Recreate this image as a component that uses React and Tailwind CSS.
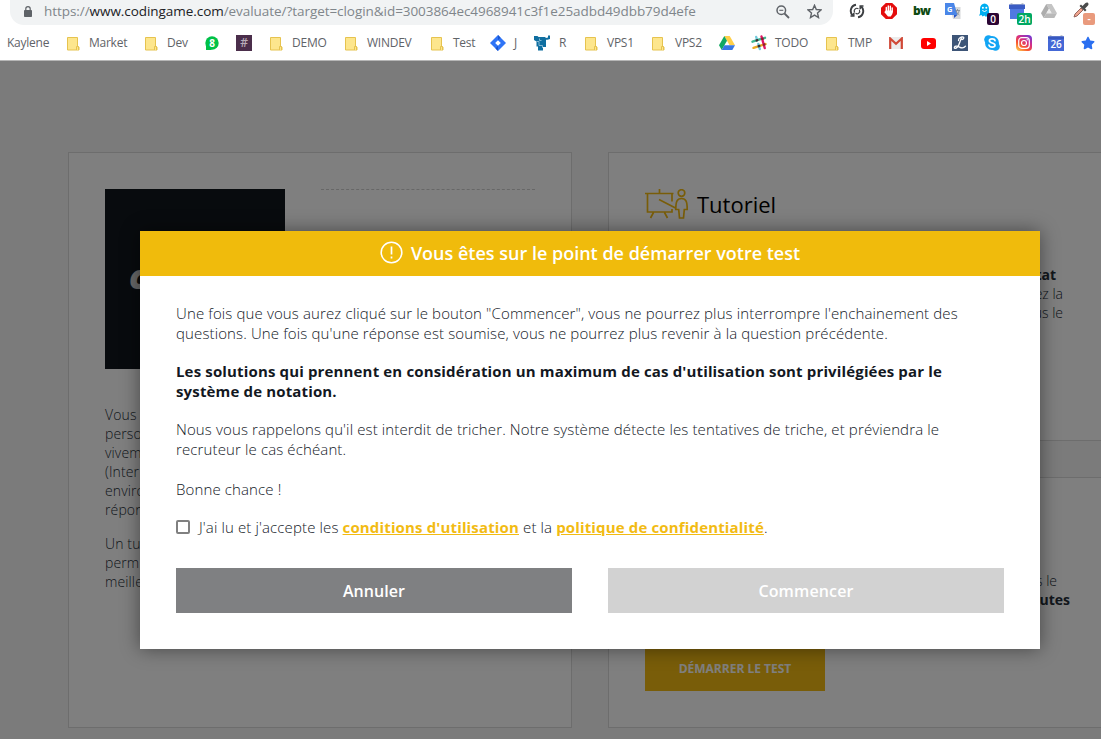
import React from "react";
import { FaStar } from "react-icons/fa";

const Folder = () => (
  <svg className="h-[15px] w-[13px] shrink-0" viewBox="0 0 13 15">
    <path d="M.5 1.500h10v9.500h1.500v3H.5z" fill="#fde68d" stroke="#e6c34f" />
    <path d="M9.500 14v-3.500h2V14" fill="#fde68d" stroke="#e6c34f" />
  </svg>
);

const Bm = ({ w, tw, icon, label }) => (
  <div className={"flex shrink-0 items-center " + w}>
    {icon}
    {label && <span className={"whitespace-nowrap " + tw}>{label}</span>}
  </div>
);

const Slot = ({ w, children }) => (
  <div className={"flex h-5 shrink-0 items-center " + w}>{children}</div>
);

const HangoutsIcon = () => (
  <svg className="size-[14px]" viewBox="0 0 14 14">
    <circle cx="7" cy="7" r="6.7" fill="#00c147" />
    <path d="M1 9v5h6z" fill="#00c147" />
    <text x="7" y="10.5" textAnchor="middle" fontSize="10" fontWeight="700" fill="#fff" fontFamily="Open Sans">8</text>
  </svg>
);

const HashIcon = () => (
  <div className="flex size-4 items-center justify-center bg-[#4b2e4b] text-[12px] font-semibold text-[#b9adb9]">#</div>
);

const JiraIcon = () => (
  <svg className="size-4" viewBox="0 0 16 16">
    <path d="M8 0l8 8-8 8-8-8z" fill="#2f74f6" />
    <path d="M8 5.200L10.800 8 8 10.800 5.200 8z" fill="#fff" />
    <path d="M8 0l2.500 2.500L8 5.200zM8 16l-2.500-2.500L8 10.800z" fill="#1a54cf" />
  </svg>
);

const RedmineIcon = () => (
  <svg className="size-4" viewBox="0 0 16 16">
    <path d="M0 1h3.500l1 1h6.500l1 1 2-.5V.5h2V4l-2.500.8h-1.500v7.200H9v3.500H4v-4H2.500V6.500L0 5z" fill="#0f6ea0" />
    <path d="M2.500 6.500H5v4h3.500M5.500 3.500v2h2M8.500 10.500V13" fill="none" stroke="#9cc8de" strokeWidth=".8" />
  </svg>
);

const DriveIcon = ({ gray }) => (
  <svg className="h-[14px] w-4" viewBox="0 0 16 14">
    <path d="M5.300 0h5.400L16 9.300h-5.400z" fill={gray ? "#c4c4c4" : "#ffcf48"} />
    <path d="M5.300 0L8 4.700 2.700 14 0 9.300z" fill={gray ? "#adadad" : "#11a861"} />
    <path d="M5.400 9.300H16L13.300 14H2.700z" fill={gray ? "#b9b9b9" : "#3777e3"} />
    {gray && <path d="M8 4.700l2.600 4.600H5.400z" fill="#ececec" />}
  </svg>
);

const SlackIcon = () => (
  <svg className="size-4" viewBox="0 0 16 16" fill="none" strokeWidth="2.400" strokeLinecap="round">
    <path d="M1.500 6.700l12.500-3.900" stroke="#3eb890" />
    <path d="M2.500 12.800l12-3.700" stroke="#e9a820" />
    <path d="M5.200 2l1 3.200M7.300 9l1.500 5" stroke="#70cadb" />
    <path d="M10.500 1.500l3.200 11.500" stroke="#e01765" />
    <path d="M5.700 5.400l.6-.2M7.700 11.200l.6-.2" stroke="#3c2b2c" />
    <path d="M11.200 3.900l.4-.1M13 9.600l.3-.1" stroke="#8c1d33" />
  </svg>
);

const GmailIcon = () => (
  <svg className="h-3 w-[14px]" viewBox="0 0 14 12">
    <path d="M0 0h14v12H0z" fill="#ececec" />
    <path d="M1.200 12V1.500L7 6.700l5.800-5.200V12" fill="none" stroke="#d14836" strokeWidth="2.200" />
  </svg>
);

const YoutubeIcon = () => (
  <svg className="h-[11px] w-[15px]" viewBox="0 0 15 11">
    <rect width="15" height="11" rx="3" fill="#f00" />
    <path d="M6 3l4 2.500L6 8z" fill="#fff" />
  </svg>
);

const ScriptLIcon = () => (
  <svg className="size-4" viewBox="0 0 16 16">
    <rect width="16" height="16" fill="#3d5577" />
    <path d="M6.500 5.500C6.500 3.500 8.500 2 10.500 2s1.500 2-.5 2.500M10 2C8 5 7.500 10 5.500 12S1.800 13.500 2.500 12s3-.8 5 .2 4.500 1 6-1" fill="none" stroke="#fff" strokeWidth="1.300" strokeLinecap="round" />
  </svg>
);

const SkypeIcon = () => (
  <svg className="size-4" viewBox="0 0 16 16">
    <circle cx="8" cy="8" r="7" fill="#12a5f4" />
    <circle cx="4.500" cy="4.500" r="4.300" fill="#12a5f4" />
    <circle cx="11.500" cy="11.500" r="4.300" fill="#12a5f4" />
    <path d="M11 5.600C10.500 3.300 5.400 3.300 5.400 5.700c0 2.800 5.600 1.700 5.600 4.500 0 2.500-5.500 2.500-6 0" fill="none" stroke="#fff" strokeWidth="1.700" strokeLinecap="round" />
  </svg>
);

const InstagramIcon = () => (
  <svg className="size-4" viewBox="0 0 16 16">
    <defs>
      <linearGradient id="ig" x1="0.100" y1="1" x2="0.800" y2="0">
        <stop offset="0" stopColor="#ffd04f" />
        <stop offset=".35" stopColor="#f8522e" />
        <stop offset=".65" stopColor="#d42d88" />
        <stop offset="1" stopColor="#7638d0" />
      </linearGradient>
    </defs>
    <rect width="16" height="16" rx="4" fill="url(#ig)" />
    <rect x="2.700" y="2.700" width="10.600" height="10.600" rx="3" fill="none" stroke="#fff" strokeWidth="1.200" />
    <circle cx="8" cy="8" r="2.500" fill="none" stroke="#fff" strokeWidth="1.200" />
    <circle cx="11.200" cy="4.800" r=".7" fill="#fff" />
  </svg>
);

const CalendarIcon = () => (
  <svg className="size-4" viewBox="0 0 16 16">
    <path d="M1.500 0h2v1h9V0h2v2h-13z" fill="#c3c7cf" />
    <path d="M0 1.500h16V16H0z" fill="#4468d6" />
    <path d="M0 1.500h16V4H0z" fill="#3858c0" />
    <text x="8" y="12.800" textAnchor="middle" fontSize="10" fontWeight="600" fill="#fff" fontFamily="Open Sans">26</text>
  </svg>
);

const CalendarBlankIcon = () => (
  <svg className="size-4" viewBox="0 0 16 16">
    <path d="M1.500 0h2v1h9V0h2v2h-13z" fill="#c3c7cf" />
    <path d="M1 5h14v11H1z" fill="#5079e0" />
    <path d="M0 1.500h16V6H0z" fill="#3b5cc4" />
  </svg>
);

const LockIcon = () => (
  <svg className="h-[11px] w-2" viewBox="0 0 8 11">
    <rect y="4" width="8" height="7" rx=".8" fill="#5f6368" />
    <path d="M1.800 4.500V2.800a2.200 2.200 0 014.400 0v1.700" fill="none" stroke="#5f6368" strokeWidth="1.200" />
  </svg>
);

const ZoomOutIcon = () => (
  <svg className="size-[14px]" viewBox="0 0 14 14" fill="none" stroke="#5f6368" strokeWidth="1.500">
    <circle cx="5.300" cy="5.300" r="4.300" />
    <path d="M8.500 8.500l4.500 4.500" strokeWidth="1.800" />
    <path d="M3.300 5.300h4" strokeWidth="1.100" />
  </svg>
);

const StarIcon = () => (
  <svg className="size-[15px]" viewBox="0 0 15 15" fill="none" stroke="#5f6368" strokeWidth="1.400">
    <path d="M7.500 1.300l1.800 4.200 4.700.4-3.500 3.100 1 4.500-4-2.400-4 2.400 1-4.500L1 5.900l4.700-.4z" />
  </svg>
);

const SyncIcon = () => (
  <svg className="size-4" viewBox="0 0 16 16" fill="none" stroke="#3c3f42" strokeWidth="1.900">
    <path d="M7 1.800A6.200 6.200 0 003.800 12.500" />
    <path d="M9 14.200A6.200 6.200 0 0012.200 3.500" />
    <path d="M1.500 13h3.300V9.700M14.500 3h-3.300v3.300" strokeWidth="1.500" />
    <path d="M5.800 9.500a2.600 2.600 0 013.700-3.600M10.300 6.800a2.600 2.600 0 01-3.700 3.500" strokeWidth="1.100" />
  </svg>
);

const AdblockIcon = () => (
  <svg className="size-4" viewBox="0 0 16 16">
    <path d="M4.800 0h6.400L16 4.800v6.400L11.200 16H4.800L0 11.200V4.800z" fill="#e40d0d" />
    <path d="M5.300 9V4.500M7.300 8V3M9.300 8V3.300M11.200 9V5" stroke="#fff" strokeWidth="1.400" strokeLinecap="round" />
    <path d="M4.600 7.500h7.300l-.5 3.500-1.700 2.500H7L3.200 9l1-.7z" fill="#fff" />
  </svg>
);

const TranslateIcon = () => (
  <svg className="size-4" viewBox="0 0 16 16">
    <path d="M5 4h10.500v12H8z" fill="#d6d8da" />
    <path d="M0 0h9l3.500 12H0z" fill="#4a86e8" />
    <path d="M9 12h3.500L9 15z" fill="#2a56c6" />
    <text x="4.800" y="8.500" textAnchor="middle" fontSize="7.500" fontWeight="700" fill="#fff" fontFamily="Open Sans">G</text>
    <path d="M10.500 7.500h4.500M12.500 6v1.500M11.300 8c.5 2 1.700 3 3 4M14 8c-.3 2-1.200 3-2.500 4" fill="none" stroke="#7d8790" strokeWidth=".8" />
  </svg>
);

const GhostIcon = () => (
  <svg className="h-[15px] w-[13px]" viewBox="0 0 12 15">
    <path d="M1.500 6a4.500 5.500 0 019 0v5l1 2-2.500-.5-1.500 1.500-1.500-1.500L4 13.500l-1-1.500-2.500.8 1-2.300z" fill="#00aef0" />
    <circle cx="4.400" cy="4.700" r="1" fill="#fff" />
    <circle cx="7.800" cy="4.700" r="1" fill="#fff" />
    <path d="M3.800 7.500q2.200 2 4.400 0" fill="none" stroke="#fff" />
  </svg>
);

const DropperIcon = () => (
  <svg className="size-4" viewBox="0 0 16 16">
    <path d="M1 15l1-3 6-6 2 2-6 6z" fill="#f0a58f" stroke="#8d5a52" strokeWidth=".9" />
    <path d="M6.500 4l5.500 5.500 1.500-1.500-1.500-1.500 3-3C16.500 1.500 14.500-.5 12.500 1L9.500 4 8 2.500z" fill="#4b4b4b" />
  </svg>
);

const TutorialIcon = () => (
  <svg className="h-[30px] w-11" viewBox="0 0 44 30" fill="none" stroke="#f2bb13" strokeWidth="1.700">
    <path d="M0 4.500h28.500M14.500 0v4M2.500 4.500v18.500h24.500v-3M27 5v7.500M8.500 23.500L5.500 29M19.500 23.500L22.500 29M14 10.500l16.500 8.500" />
    <circle cx="36.500" cy="4" r="3.300" />
    <path d="M34.500 29l-.8-8.500h-2.900c0-7.500 1-11 5.700-11s5.700 3.500 5.700 11h-2.900L38.500 29z" />
  </svg>
);

const Badge = ({ cls, children }) => (
  <span className={"absolute flex items-center justify-center rounded-[2px] text-[10px] font-semibold text-white " + cls}>{children}</span>
);

function Chrome() {
  return (
    <header className="h-[61px] shrink-0 overflow-hidden border-b border-[#b6b6b6] bg-white">
      <div className="flex h-[25px]">
        <div className="ml-2.5 flex w-[823px] shrink-0 items-center rounded-b-[14px] bg-[#f1f3f4] pb-[2px] pl-3.5">
          <LockIcon />
          <div className="ml-3 w-[732px] text-[13.500px] tracking-[-0.055px] whitespace-nowrap text-[#80868b]">
            https://<span className="text-[#202124]">www.codingame.com</span>/evaluate/?target=clogin&amp;id=3003864ec4968941c3f1e25adbd49dbb79d4efe
          </div>
          <ZoomOutIcon />
          <div className="ml-[17px]"><StarIcon /></div>
        </div>
        <div className="ml-4 flex items-start pt-[1px]">
          <Slot w="w-8"><SyncIcon /></Slot>
          <Slot w="w-8"><AdblockIcon /></Slot>
          <Slot w="w-8"><span className="text-[12px] leading-none font-extrabold tracking-[-0.800px] text-[#0d4a12]">bw</span></Slot>
          <Slot w="w-8"><TranslateIcon /></Slot>
          <div className="relative flex h-6 w-8 items-start pt-[2px] pl-[1px]"><GhostIcon /><Badge cls="left-[10px] top-[12px] h-3 w-3 bg-[#2b0534]">0</Badge></div>
          <div className="relative h-6 w-8 pt-[2px]"><CalendarBlankIcon /><Badge cls="left-2 top-3 h-3 w-[15px] bg-[#00a862]">2h</Badge></div>
          <Slot w="w-8"><DriveIcon gray /></Slot>
          <div className="relative h-6 w-5 pt-[1px]"><DropperIcon /><Badge cls="left-[10px] top-3 h-3 w-3 bg-[#e99a7d]">-</Badge></div>
        </div>
      </div>
      <div className="flex h-9 items-center text-[12px] tracking-[-0.250px] text-[#5f6368]">
        <span className="ml-[7px] w-[60px] shrink-0">Kaylene</span>
        <Bm w="w-[78px]" tw="ml-[9px]" icon={<Folder />} label="Market" />
        <Bm w="w-[60px]" tw="ml-[9px]" icon={<Folder />} label="Dev" />
        <Bm w="w-[31px]" icon={<HangoutsIcon />} />
        <Bm w="w-[34px]" icon={<HashIcon />} />
        <Bm w="w-[75px]" tw="ml-[9px]" icon={<Folder />} label="DEMO" />
        <Bm w="w-[86px]" tw="ml-[9px]" icon={<Folder />} label="WINDEV" />
        <Bm w="w-[59px]" tw="ml-[9px]" icon={<Folder />} label="Test" />
        <Bm w="w-[44px]" tw="ml-2" icon={<JiraIcon />} label="J" />
        <Bm w="w-[51px]" tw="ml-[9px]" icon={<RedmineIcon />} label="R" />
        <Bm w="w-[67px]" tw="ml-[9px]" icon={<Folder />} label="VPS1" />
        <Bm w="w-[67px]" tw="ml-[10px]" icon={<Folder />} label="VPS2" />
        <Bm w="w-[32px]" icon={<DriveIcon />} />
        <Bm w="w-[75px]" tw="ml-2" icon={<SlackIcon />} label="TODO" />
        <Bm w="w-[63px]" tw="ml-[9px]" icon={<Folder />} label="TMP" />
        <Bm w="w-[32px]" icon={<GmailIcon />} />
        <Bm w="w-[31px]" icon={<YoutubeIcon />} />
        <Bm w="w-[32px]" icon={<ScriptLIcon />} />
        <Bm w="w-[32px]" icon={<SkypeIcon />} />
        <Bm w="w-[32px]" icon={<InstagramIcon />} />
        <Bm w="w-[33px]" icon={<CalendarIcon />} />
        <FaStar className="size-[14px] shrink-0 text-[#2b6ff0]" />
      </div>
    </header>
  );
}

function Page() {
  return (
    <div className="flex h-full w-[1200px] gap-9 bg-[#f7f7f7] pt-[91px] pl-[68px] text-[14px] leading-[19px] font-light text-[#252e38]">
      <section className="h-[576px] w-[504px] shrink-0 border border-[#dadada] bg-white p-9">
        <div className="flex gap-9">
          <div className="flex h-[180px] w-[180px] shrink-0 items-center bg-[#10171d] pb-[5px] pl-6 text-[34px] font-extrabold text-[#d0d0d0] italic">c</div>
          <div className="w-[214px] border-t border-dashed border-[#cfcfcf]" />
        </div>
        <p className="mt-9 tracking-[0.120px]">Vous<br />perso<br />vivem<br />(Inter<br />enviro<br />répon</p>
        <p className="mt-[15px] tracking-[0.120px]">Un tu<br />perm<br />meille</p>
      </section>
      <div className="flex w-[504px] shrink-0 flex-col gap-9">
        <section className="h-[289px] border border-[#dadada] bg-white p-9">
          <div className="flex items-center gap-2">
            <TutorialIcon />
            <h2 className="text-[22px] font-medium text-black">Tutoriel</h2>
          </div>
          <div className="mt-[46px] flex w-[418px] flex-col items-end">
            <b className="mr-[7px] font-bold">tat</b>
            <span>ez la</span>
            <span>us le</span>
          </div>
        </section>
        <section className="flex h-[251px] flex-col border border-[#dadada] bg-white px-9 pt-[93px]">
          <div className="flex w-[425px] flex-col items-end">
            <span className="mr-[13px]">s le</span>
            <b className="font-bold">utes</b>
          </div>
          <button className="mt-9 h-[46px] w-[180px] bg-[#f2bb13] text-[12px] font-bold text-white">DÉMARRER LE TEST</button>
        </section>
      </div>
    </div>
  );
}

function Modal() {
  return (
    <div className="w-[900px] bg-white text-[15px] leading-5 font-light tracking-[0.125px] text-[#13181f] shadow-[0_0_18px_rgba(0,0,0,0.45)]">
      <div className="flex h-[45px] items-center justify-center gap-2 bg-[#f0bb0c] pb-[2px] text-[18px] font-semibold tracking-normal text-white">
        <svg className="size-[23px]" viewBox="0 0 23 23" fill="none" stroke="#fff">
          <circle cx="11.500" cy="11.500" r="10.300" strokeWidth="1.600" />
          <path d="M11.500 5.500v8" strokeWidth="1.700" />
          <path d="M11.500 15.500v2" strokeWidth="1.700" />
        </svg>
        <span>Vous êtes sur le point de démarrer votre test</span>
      </div>
      <div className="flex h-[373px] flex-col px-9 pt-[27px]">
        <p>Une fois que vous aurez cliqué sur le bouton "Commencer", vous ne pourrez plus interrompre l'enchainement des<br />questions. Une fois qu'une réponse est soumise, vous ne pourrez plus revenir à la question précédente.</p>
        <p className="mt-[18px] font-bold tracking-[0.150px]">Les solutions qui prennent en considération un maximum de cas d'utilisation sont privilégiées par le<br />système de notation.</p>
        <p className="mt-[18px]">Nous vous rappelons qu'il est interdit de tricher. Notre système détecte les tentatives de triche, et préviendra le<br />recruteur le cas échéant.</p>
        <p className="mt-5">Bonne chance !</p>
        <label className="mt-[18px] flex items-center">
          <span className="mr-[9px] size-[14px] rounded-[2px] border-2 border-[#808080]" />
          <span>J'ai lu et j'accepte les <a className="font-bold tracking-[0.150px] text-[#f2bb13] underline">conditions d'utilisation</a> et la <a className="font-bold tracking-[0.150px] text-[#f2bb13] underline">politique de confidentialité</a>.</span>
        </label>
        <div className="mt-[31px] flex gap-9 text-[16px] font-semibold text-white">
          <button className="h-[45px] flex-1 bg-[#7f8082] tracking-[0.050px]">Annuler</button>
          <button className="h-[45px] flex-1 bg-[#d2d2d2] tracking-[0.150px]">Commencer</button>
        </div>
      </div>
    </div>
  );
}

export default function App() {
  return (
    <div className="flex h-[739px] w-[1101px] flex-col overflow-hidden font-['Open_Sans','Noto_Sans',sans-serif]">
      <Chrome />
      <main className="relative min-h-0 flex-1 overflow-hidden">
        <Page />
        <div className="absolute inset-0 bg-black/50 pt-[170px] pl-[140px]">
          <Modal />
        </div>
      </main>
    </div>
  );
}
